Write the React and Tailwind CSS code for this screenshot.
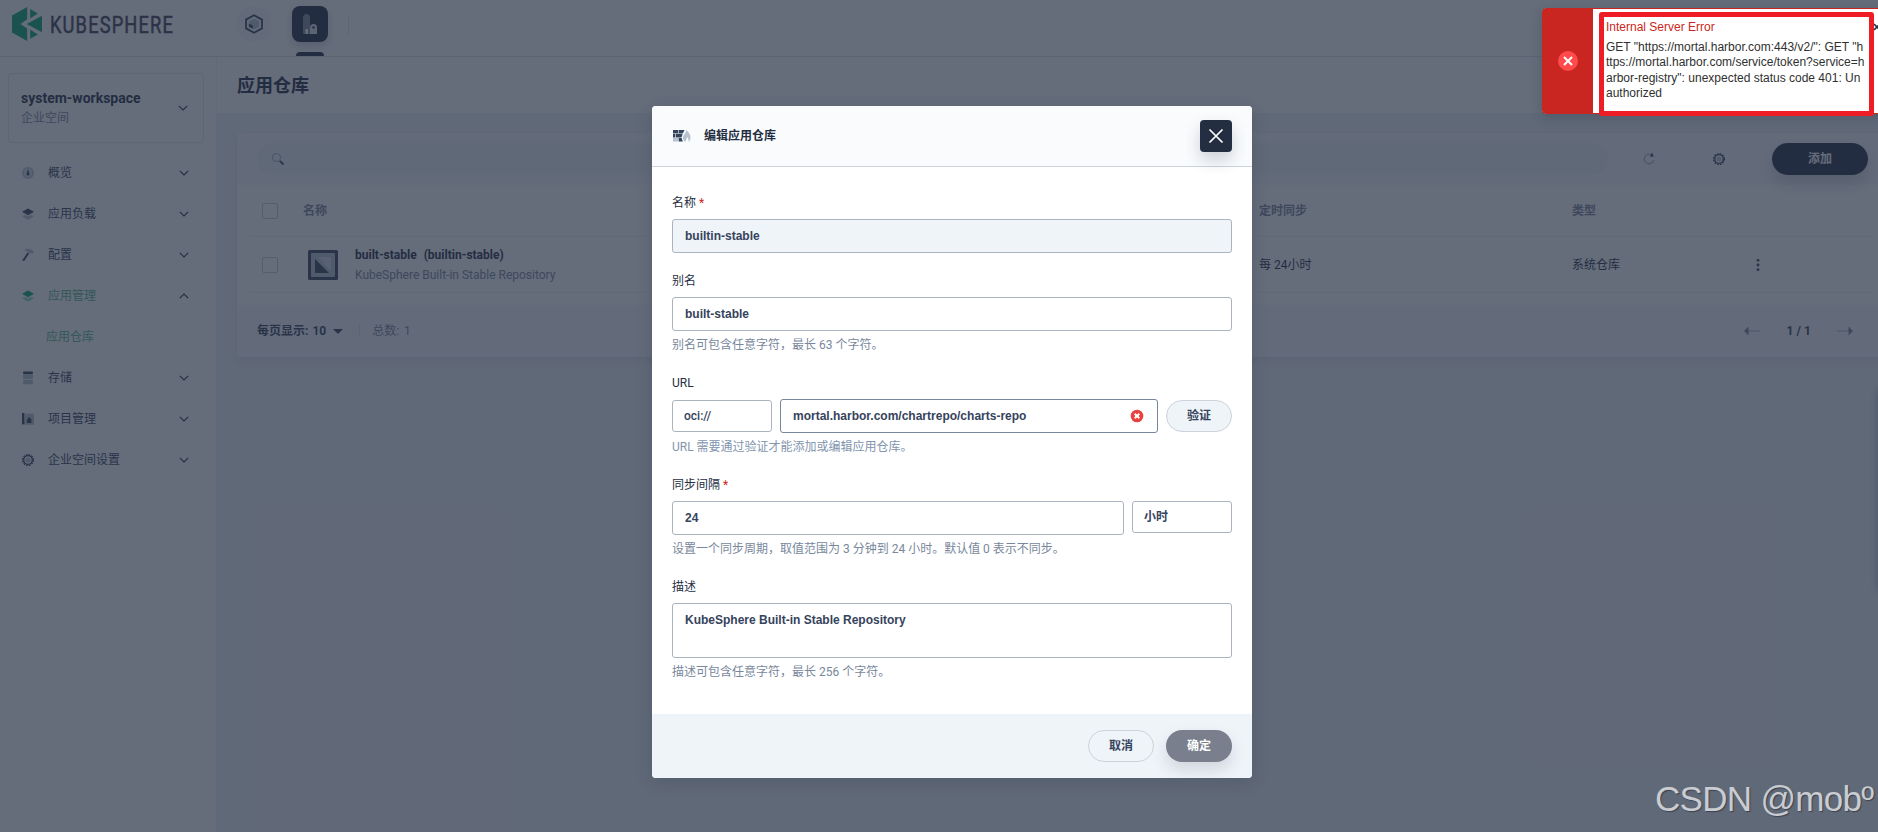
import clsx from 'clsx';

const menus = [
  { icon: 'gauge', label: '概览' },
  { icon: 'layers', label: '应用负载' },
  { icon: 'hammer', label: '配置' },
  { icon: 'layers', label: '应用管理', open: true, children: ['应用仓库'] },
  { icon: 'storage', label: '存储' },
  { icon: 'project', label: '项目管理' },
  { icon: 'cog', label: '企业空间设置' },
];

function Chevron({ up }) {
  return (
    <svg width="16" height="16" viewBox="0 0 16 16" fill="none" stroke="#242e42" strokeWidth="1.1">
      <path d={up ? 'M3.8 10.2 8 6l4.200 4.200' : 'M3.8 5.8 8 10l4.200-4.200'} />
    </svg>
  );
}

function Cog() {
  return (
    <svg width="16" height="16" viewBox="0 0 16 16" fill="none">
      <circle cx="8" cy="8" r="5.4" stroke="#36435c" strokeWidth="1.4" strokeDasharray="1.7 1.127" />
      <circle cx="8" cy="8" r="4.3" stroke="#36435c" strokeWidth="1.300" />
      <circle cx="8" cy="8" r="2.500" fill="#b6c2cd" />
    </svg>
  );
}

function MenuIcon({ name, active }) {
  if (name === 'cog') return <Cog />;
  return (
    <svg width="16" height="16" viewBox="0 0 16 16">
      {name === 'gauge' && (
        <>
          <circle cx="8" cy="8" r="6" fill="#b6c2cd" />
          <circle cx="8" cy="8" r="4.5" fill="#d5dde5" />
          <path d="M8 4 9.3 8.5a1.4 1.4 0 1 1-2.6 0z" fill="#36435c" />
        </>
      )}
      {name === 'layers' && (
        <>
          <path d="m2 10.3 3-1.4 3 1.4 3-1.4 3 1.4-6 3.4z" fill={active ? '#90e0c5' : '#b6c2cd'} />
          <path d="m8 2.5 6 3.3-6 3.4-6-3.4z" fill={active ? '#00aa72' : '#36435c'} />
        </>
      )}
      {name === 'hammer' && (
        <>
          <path d="m7.6 5.4 1.6 1L4.2 14l-2-.6z" fill="#36435c" />
          <path d="M4 3.5C6 1.4 9 1.4 11 2.4l2.6 2.2-1 2.4-1-1-1.4.6-3.2-2.4z" fill="#b6c2cd" />
        </>
      )}
      {name === 'storage' && (
        <g fill="#b6c2cd">
          <rect x="3" y="4" width="10" height="5" rx="1" />
          <rect x="3" y="9.7" width="10" height="4.5" rx="1.5" />
          <rect x="3" y="1.5" width="10" height="2.4" rx="1" fill="#36435c" />
        </g>
      )}
      {name === 'project' && (
        <>
          <path d="M5.5 2.7H14v11H4z" fill="#b6c2cd" />
          <path d="M2 2h2.4v11.4H2z" fill="#36435c" />
          <path d="M7 8.4 9.2 6l2.2 2.4V12H7z" fill="#36435c" />
        </>
      )}
    </svg>
  );
}

function Header() {
  return (
    <header className="flex h-[57px] shrink-0 border-b border-[#dde3ea] bg-white">
      <div className="flex w-[232px] items-start gap-[9px] pt-[7px] pl-3">
        <svg width="30" height="34" viewBox="0 0 30 34" fill="#00a971">
          <path d="M0 8.6 15.2 0v12.2L8.4 17l6.8 4.6V34L0 25.4z" />
          <path d="m18.2 2 7.6 4.4-7.6 5z" />
          <path d="M30 8.8v16.4L14.8 17z" />
          <path d="m18.2 22.6 7.6 4.8-7.6 4.4z" />
        </svg>
        <svg width="130" height="36" viewBox="0 0 130 36" className="overflow-visible">
          <text x="-1" y="26" textLength="124" lengthAdjust="spacingAndGlyphs" fill="#3d3d4f" stroke="#3d3d4f" strokeWidth="0.5" className="font-['Roboto',sans-serif] text-[24.5px] tracking-[1.5px]">
            KUBESPHERE
          </text>
        </svg>
      </div>
      <div className="flex pt-1.5 pl-1">
        <div className="flex size-9 items-center justify-center rounded-full bg-[#f9fbfd]">
          <svg width="20" height="20" viewBox="0 0 20 20" fill="none">
            <path d="m10 1.2 8 4.4v8.8l-8 4.4-8-4.4V5.6z" stroke="#36435c" strokeWidth="1.8" />
            <path d="m10 4.6 5 2.6v5.6l-5 2.8-5-2.8V7.2z" fill="#b6c2cd" />
            <path d="m4.8 9.4 4 2v3.4l-4-2z" fill="#36435c" />
          </svg>
        </div>
        <div className="ml-5 flex flex-col items-center">
          <div className="flex size-9 items-center justify-center rounded-lg bg-[#242e42] shadow-[0_4px_8px_rgba(36,46,66,0.2)]">
            <svg width="20" height="24" viewBox="0 0 20 24">
              <path d="M3 4.5 5 2h3l2 2.5V22H3z" fill="#7e8a9a" />
              <path d="M10 22v-6.5a3.5 3.5 0 0 1 7 0V22z" fill="#dfe4ea" />
              <path d="M5.5 17H8v5H5.5z" fill="#fff" />
              <circle cx="13.5" cy="15.5" r="1.2" fill="#242e42" />
            </svg>
          </div>
          <div className="mt-2.5 h-1 w-7 rounded-t-sm bg-[#242e42]" />
        </div>
        <div className="mt-2.5 ml-5 h-5 w-px bg-[#e3e9ef]" />
      </div>
    </header>
  );
}

function Sidebar() {
  return (
    <aside className="w-[217px] shrink-0 border-r border-[#eff4f9] bg-white pt-4 pr-3 pl-2">
      <div className="flex h-[70px] items-center justify-between rounded border border-[#e3e9ef] px-3">
        <div>
          <div className="text-sm leading-5 font-bold text-[#242e42]">system-workspace</div>
          <div className="text-xs leading-5 text-[#79879c]">企业空间</div>
        </div>
        <Chevron />
      </div>
      <nav className="mt-[9px] text-xs text-[#36435c]">
        {menus.map(menu => (
          <div key={menu.label}>
            <div className="flex h-[41px] items-center pr-3 pl-3">
              <MenuIcon name={menu.icon} active={menu.open} />
              <span className={clsx('ml-3 flex-1', menu.open && 'text-[#55bc8a]')}>{menu.label}</span>
              <Chevron up={menu.open} />
            </div>
            {menu.children?.map(child => (
              <div key={child} className="flex h-[41px] items-center pl-[38px] text-[#55bc8a]">
                {child}
              </div>
            ))}
          </div>
        ))}
      </nav>
    </aside>
  );
}

function PageArrow({ right }) {
  return (
    <svg width="16" height="10" viewBox="0 0 16 10" className={right ? 'rotate-180' : ''}>
      <path d="M4 4.2h12v1.6H4z" fill="#c4cdd8" />
      <path d="M4.500.5v9L0 5z" fill="#79879c" />
    </svg>
  );
}

function Checkbox() {
  return <span className="size-4 shrink-0 rounded-[2px] border border-[#c4cdd8]" />;
}

function RepoTable() {
  return (
    <div className="mt-5 ml-5 h-56 w-[1651px] rounded bg-white text-xs text-[#242e42] shadow-[0_4px_8px_rgba(36,46,66,0.08)]">
      <div className="flex h-[52px] items-center bg-[#f9fbfd] pl-5">
        <div className="flex h-8 w-[1351px] items-center rounded-full bg-[#eff4f9] pl-3.5">
          <svg width="14" height="14" viewBox="0 0 14 14" fill="none">
            <circle cx="5.5" cy="5.5" r="4" stroke="#abb4be" strokeWidth="1.2" />
            <path d="m8.8 8.8 3.7 3.7" stroke="#36435c" strokeWidth="1.8" />
          </svg>
        </div>
        <svg className="ml-[34px]" width="14" height="14" viewBox="0 0 14 14" fill="none">
          <path d="M8.500 2.400A4.800 4.800 0 1 0 11.800 8" stroke="#abb4be" strokeWidth="1.2" />
          <path d="m10 .5 1.800 4.300-4-.3z" fill="#36435c" />
        </svg>
        <div className="ml-[55px]"><Cog /></div>
        <button className="ml-[45px] h-8 w-24 rounded-full bg-[#242e42] font-bold text-white shadow-[0_8px_16px_rgba(36,46,66,0.2)]">添加</button>
      </div>
      <div className="mx-3 flex h-[52px] items-center border-b border-[#eff4f9] pl-[13px] font-bold text-[#79879c]">
        <Checkbox />
        <span className="ml-[25px] w-[956px] pt-px">名称</span>
        <span className="w-[313px] pt-px">定时同步</span>
        <span className="pt-px">类型</span>
      </div>
      <div className="mx-3 flex h-14 items-center border-b border-[#eff4f9] pl-[13px]">
        <Checkbox />
        <div className="ml-[25px] flex w-[956px] items-center pl-[5px]">
          <svg width="30" height="30" viewBox="0 0 30 30">
            <rect width="30" height="30" rx="1.5" fill="#36435c" />
            <rect x="3" y="3" width="24" height="24" rx="1" fill="#b6c2cd" />
            <path d="M7 9v14h14z" fill="#36435c" />
            <path d="M10 7h13v14z" fill="#d5dde5" />
          </svg>
          <div className="ml-[17px]">
            <div className="flex gap-[7px] leading-5 font-bold">
              <span>built-stable</span>
              <span>(builtin-stable)</span>
            </div>
            <div className="leading-5 text-[#79879c]">KubeSphere Built-in Stable Repository</div>
          </div>
        </div>
        <span className="w-[313px]">每 24小时</span>
        <span className="w-[184px]">系统仓库</span>
        <svg width="4" height="16" viewBox="0 0 4 16" fill="#36435c">
          <circle cx="2" cy="3.300" r="1.400" />
          <circle cx="2" cy="8" r="1.400" />
          <circle cx="2" cy="12.700" r="1.400" />
        </svg>
      </div>
      <div className="mt-3 flex h-[52px] items-center bg-[#f9fbfd] pl-5">
        <span className="flex gap-1 font-bold text-[#36435c]">
          <span>每页显示:</span>
          <span>10</span>
        </span>
        <svg className="ml-[7px]" width="10" height="5" viewBox="0 0 10 5" fill="#36435c">
          <path d="M0 0h10L5 5z" />
        </svg>
        <span className="ml-4 h-3 w-px bg-[#dde3ea]" />
        <span className="ml-3 flex w-[1372px] gap-[5px] text-[#79879c]">
          <span>总数:</span>
          <span>1</span>
        </span>
        <PageArrow />
        <span className="w-[77px] text-center font-bold text-[#36435c]">1 / 1</span>
        <PageArrow right />
      </div>
    </div>
  );
}

function Field({ label, required, hint, className, hintClass, children }) {
  return (
    <div className={className}>
      <div className="mb-1.5 flex h-5 items-center text-[#242e42]">
        {label}
        {required && <span className="ml-[3px] text-[#ca2621]">*</span>}
      </div>
      {children}
      {hint && <div className={clsx('mt-1 h-5 leading-5', hintClass || 'text-[#79879c]')}>{hint}</div>}
    </div>
  );
}

const inputClass = "w-full rounded-[3px] border border-[#abb4be] px-3 font-['Liberation_Sans','Noto_Sans_CJK_SC',sans-serif] font-bold text-[#36435c] outline-none";

function EditModal() {
  return (
    <div className="flex h-[672px] w-[600px] flex-col overflow-hidden rounded bg-white text-xs shadow-[0_4px_16px_rgba(36,46,66,0.2)]">
      <div className="flex h-[61px] items-center border-b border-[#ccd3db] bg-[#f9fbfd] pr-5 pl-[21px]">
        <svg width="18" height="14" viewBox="0 0 18 14">
          <path d="M0 1h5v3.200H0zM5.600 1h5.900l-1.500 3.200H5.600zM0 4.800h2.400v3.600H0zM3 4.800h6.700L8.500 8.400H3z" fill="#36435c" />
          <path d="M0 9h5v3.500H0z" fill="#b6c2cd" />
          <path d="M5.600 9h3l1.200 3.500H5.600z" fill="#36435c" />
          <path d="M13 1c3 2 4.500 5 4.500 7.500 0 2.500-1 3.500-2 4.500.5-2 0-3.500-1.300-5-.4 2-1.800 3-1.700 5-2-1-3-3-2.500-5 .5-2 3-3.500 3-7z" fill="#b6c2cd" />
        </svg>
        <h2 className="ml-[13px] flex-1 font-bold text-[#242e42]">编辑应用仓库</h2>
        <button className="flex size-8 items-center justify-center rounded bg-[#242e42] shadow-[0_8px_16px_rgba(36,46,66,0.2)]">
          <svg width="16" height="16" viewBox="0 0 16 16" stroke="#fff" strokeWidth="1.7">
            <path d="m1.500 1.500 13 13M14.500 1.500l-13 13" />
          </svg>
        </button>
      </div>
      <div className="flex-1 px-5 pt-[26px]">
        <Field label="名称" required>
          <input className={clsx(inputClass, 'block h-[34px] bg-[#eff4f9]')} defaultValue="builtin-stable" />
        </Field>
        <Field label="别名" hint="别名可包含任意字符，最长 63 个字符。" className="mt-[18px]">
          <input className={clsx(inputClass, 'block h-[34px]')} defaultValue="built-stable" />
        </Field>
        <Field label="URL" hint="URL 需要通过验证才能添加或编辑应用仓库。" hintClass="text-[#8295ae]" className="mt-[18px]">
          <div className="flex h-[34px] items-center gap-2">
            <div className="flex h-8 w-[100px] shrink-0 items-center rounded-[3px] border border-[#abb4be] pl-[11px] font-medium text-[#36435c]">
              oci://
            </div>
            <div className="flex h-[34px] flex-1 items-center rounded-[3px] border border-[#79879c] pr-[13px] pl-3 font-['Liberation_Sans',sans-serif] font-bold text-[#36435c]">
              <span className="flex-1">mortal.harbor.com/chartrepo/charts-repo</span>
              <svg width="14" height="14" viewBox="0 0 14 14">
                <circle cx="7" cy="7" r="6.300" fill="#e8413f" />
                <path d="m4.700 4.700 4.600 4.600M9.300 4.700 4.700 9.300" stroke="#fff" strokeWidth="2" />
              </svg>
            </div>
            <button className="h-8 w-[66px] rounded-full border border-[#ccd3db] bg-[#eff4f9] font-bold text-[#36435c]">验证</button>
          </div>
        </Field>
        <Field label="同步间隔" required hint="设置一个同步周期，取值范围为 3 分钟到 24 小时。默认值 0 表示不同步。" className="mt-[18px]">
          <div className="flex h-[34px] items-start gap-2">
            <input className={clsx(inputClass, 'h-[34px]')} defaultValue="24" />
            <div className="flex h-8 w-[100px] shrink-0 items-center rounded-[3px] border border-[#abb4be] pl-[11px] font-bold text-[#36435c]">
              小时
            </div>
          </div>
        </Field>
        <Field label="描述" hint="描述可包含任意字符，最长 256 个字符。" className="mt-[18px]">
          <textarea className={clsx(inputClass, 'block h-[55px] resize-none py-2')} defaultValue="KubeSphere Built-in Stable Repository" />
        </Field>
      </div>
      <div className="flex h-16 items-center justify-end gap-3 bg-[#eff4f9] pr-5">
        <button className="h-8 w-[66px] rounded-full border border-[#ccd3db] font-bold text-[#36435c]">取消</button>
        <button className="h-8 w-[66px] rounded-full bg-[#797f8c] font-bold text-white shadow-[0_8px_16px_rgba(36,46,66,0.15)]">确定</button>
      </div>
    </div>
  );
}

function ErrorNotify() {
  return (
    <div className="absolute top-2 left-[1542px] flex h-[106px] w-[346px] rounded border border-[#ca2621] bg-white font-['Liberation_Sans',sans-serif] text-xs shadow-[0_4px_12px_rgba(36,46,66,0.25)]">
      <div className="flex w-[50px] shrink-0 items-center justify-center bg-[#ca2621]">
        <svg width="20" height="20" viewBox="0 0 20 20">
          <circle cx="10" cy="10" r="10" fill="#ff4b4b" />
          <path d="m6 6 8 8M14 6l-8 8" stroke="#fff" strokeWidth="2" />
        </svg>
      </div>
      <div className="w-[270px] pt-2.5 pl-[13px]">
        <div className="h-[21px] leading-4 text-[#ca2621]">Internal Server Error</div>
        <p className="leading-[15.4px] whitespace-pre text-[#303030]">
          {'GET "https://mortal.harbor.com:443/v2/": GET "h\nttps://mortal.harbor.com/service/token?service=h\narbor-registry": unexpected status code 401: Un\nauthorized'}
        </p>
      </div>
      <svg className="mt-3.5 ml-2.5" width="8" height="8" viewBox="0 0 8 8" stroke="#242e42" strokeWidth="1.600">
        <path d="m1 1 6 6M7 1 1 7" />
      </svg>
      <div className="absolute top-[3px] left-14 h-[104px] w-[275px] rounded-[3px] border-[5px] border-[#ee1c25]" />
    </div>
  );
}

export default function App() {
  return (
    <div className="relative h-[832px] w-[1878px] overflow-hidden bg-[#eff4f9] font-['Roboto','Noto_Sans_CJK_SC',sans-serif]">
      <div className="flex h-full flex-col">
        <Header />
        <div className="flex min-h-0 flex-1">
          <Sidebar />
          <main className="min-w-0 flex-1">
            <h1 className="flex h-14 items-center bg-white pt-0.5 pl-5 text-lg font-bold text-[#242e42]">应用仓库</h1>
            <RepoTable />
          </main>
        </div>
      </div>
      {/* shadow of the docked side panel */}
      <div className="absolute top-[390px] left-[1878px] h-[200px] w-10 shadow-[0_0_8px_rgba(36,46,66,0.35)]" />
      <div className="absolute inset-0 flex justify-center bg-[#242e42]/70 pt-[106px] pl-[26px]">
        <EditModal />
      </div>
      <ErrorNotify />
      <div className="absolute top-[776px] left-[1655px] font-['Liberation_Sans',sans-serif] text-[35px] leading-[46px] tracking-[-0.7px] whitespace-nowrap text-[#c9ccd1] [text-shadow:1px_1px_1px_rgba(40,40,50,0.6)]">
        CSDN @mobº
      </div>
    </div>
  );
}
